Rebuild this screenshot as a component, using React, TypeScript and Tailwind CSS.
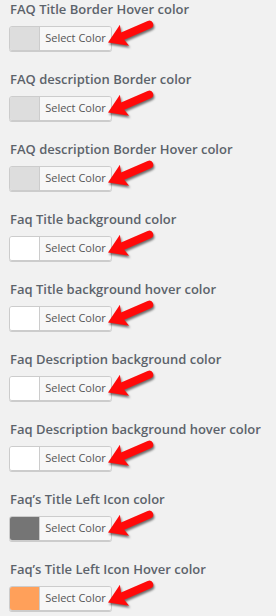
const rows = [
  { label: "FAQ Title Border Hover color", swatch: "bg-[#dddddd]" },
  { label: "FAQ description Border color", swatch: "bg-[#dddddd]" },
  { label: "FAQ description Border Hover color", swatch: "bg-[#dddddd]" },
  { label: "Faq Title background color", swatch: "bg-white" },
  { label: "Faq Title background hover color", swatch: "bg-white" },
  { label: "Faq Description background color", swatch: "bg-white" },
  { label: "Faq Description background hover color", swatch: "bg-white" },
  { label: "Faq’s Title Left Icon color", swatch: "bg-[#757575]" },
  { label: "Faq’s Title Left Icon Hover color", swatch: "bg-[#ffa05a]" },
];

const Arrow = () => (
  <svg
    width="64"
    height="44"
    viewBox="0 0 64 44"
    className="absolute left-[98px] top-[4px] drop-shadow-[1px_2px_1px_rgba(0,0,0,0.55)]"
  >
    <g transform="translate(10 38.5) rotate(-23.5)">
      <path
        d="M0 0 L18 -11.5 L16 -4 L45 -4 A4 4 0 0 1 45 4 L16 4 L18 11.5 Z"
        fill="#ff0a0a"
      />
    </g>
  </svg>
);

export default function App() {
  return (
    <div className="w-[276px] h-[616px] bg-[#f1f1f1] overflow-hidden font-['Open_Sans',sans-serif]">
      {rows.map((row) => (
        <div key={row.label} className="relative h-[70px] pl-[9px]">
          <div className="h-[18px] pl-px text-[13px] leading-[18px] font-semibold text-[#5c636b] whitespace-nowrap">
            {row.label}
          </div>
          <div className="mt-[8px] flex h-[25px] w-[103px] rounded-[3px] border border-[#cccccc] shadow-[0_1px_0_#cccccc] overflow-hidden">
            <span className={`w-[30px] border-r border-[#cccccc] ${row.swatch}`} />
            <span className="flex-1 flex items-center justify-center bg-[#f7f7f7] text-[11px] text-[#555555]">
              Select Color
            </span>
          </div>
          <Arrow />
        </div>
      ))}
    </div>
  );
}
